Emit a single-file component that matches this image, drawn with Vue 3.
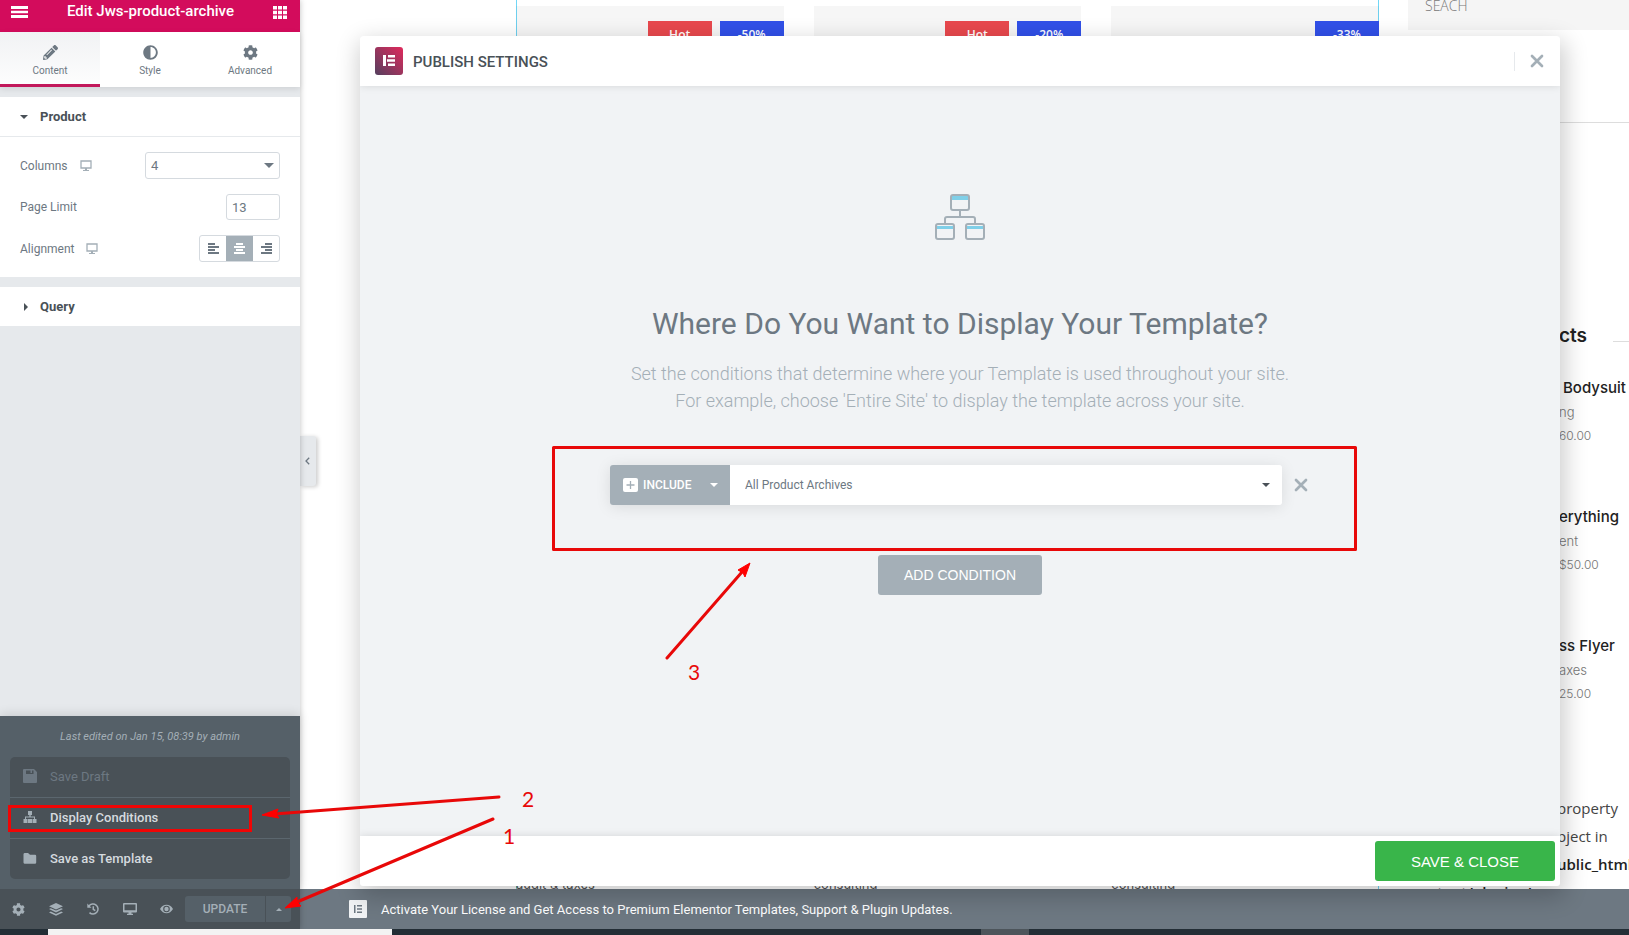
<script setup>
import { ref } from 'vue'

const cog = 'M487.4 315.7l-42.6-24.6c4.3-23.2 4.3-47 0-70.2l42.6-24.6c4.9-2.8 7.1-8.6 5.5-14-11.1-35.6-30-67.8-54.7-94.6-3.8-4.1-10-5.1-14.8-2.3L380.8 110c-17.9-15.4-38.5-27.3-60.8-35.1V25.8c0-5.6-3.9-10.5-9.4-11.7-36.7-8.2-74.3-7.8-109.2 0-5.5 1.2-9.4 6.1-9.4 11.7V75c-22.2 7.9-42.8 19.8-60.8 35.1L88.7 85.5c-4.9-2.8-11-1.9-14.8 2.3-24.7 26.7-43.6 58.9-54.7 94.6-1.7 5.4.6 11.2 5.5 14L67.3 221c-4.3 23.2-4.3 47 0 70.2l-42.6 24.6c-4.9 2.8-7.1 8.6-5.5 14 11.1 35.6 30 67.8 54.7 94.6 3.8 4.1 10 5.1 14.8 2.3l42.6-24.6c17.9 15.4 38.5 27.3 60.8 35.1v49.2c0 5.6 3.9 10.5 9.4 11.7 36.7 8.2 74.3 7.8 109.2 0 5.5-1.2 9.4-6.1 9.4-11.7v-49.2c22.2-7.9 42.8-19.8 60.8-35.1l42.6 24.6c4.9 2.8 11 1.9 14.8-2.3 24.7-26.7 43.6-58.9 54.7-94.6 1.5-5.5-.7-11.3-5.6-14.1zM256 336c-44.1 0-80-35.9-80-80s35.9-80 80-80 80 35.9 80 80-35.9 80-80 80z'
const pencil = 'M497.9 142.1l-46.1 46.1c-4.7 4.7-12.3 4.7-17 0l-111-111c-4.7-4.7-4.7-12.3 0-17l46.1-46.1c18.7-18.7 49.1-18.7 67.9 0l60.1 60.1c18.8 18.7 18.8 49.1 0 67.9zM284.2 99.8L21.6 362.4.4 483.9c-2.9 16.4 11.4 30.6 27.8 27.8l121.5-21.3 262.6-262.6c4.7-4.7 4.7-12.3 0-17l-111-111c-4.8-4.7-12.4-4.7-17.1 0zM124.1 339.9c-5.5-5.5-5.5-14.3 0-19.8l154-154c5.5-5.5 14.3-5.5 19.8 0s5.5 14.3 0 19.8l-154 154c-5.5 5.5-14.3 5.5-19.8 0zM88 424h48v36.3l-64.5 11.3-31.1-31.1L51.7 376H88v48z'
const half = 'M8 256c0 137 111 248 248 248s248-111 248-248S393 8 256 8 8 119 8 256zm248 184V72c101.700 0 184 82.300 184 184 0 101.700-82.300 184-184 184z'

const tabs = [
  { name: 'Content', path: pencil },
  { name: 'Style', path: half },
  { name: 'Advanced', path: cog },
]
const activeTab = ref('Content')
const columns = ref('4')
const pageLimit = ref('13')
const alignment = ref('center')
const alignments = [
  { id: 'left', path: 'M0 0h7v2H0zM0 3h11v2H0zM0 6h7v2H0zM0 9h11v2H0z' },
  { id: 'center', path: 'M2 0h7v2H2zM0 3h11v2H0zM2 6h7v2H2zM0 9h11v2H0z' },
  { id: 'right', path: 'M4 0h7v2H4zM0 3h11v2H0zM4 6h7v2H4zM0 9h11v2H0z' },
]

const products = [
  { badges: ['Hot', '-50%'], category: 'audit & taxes' },
  { badges: ['Hot', '-20%'], category: 'consulting' },
  { badges: ['-33%'], category: 'consulting' },
]
const sideProducts = [
  { name: ' Bodysuit', category: 'ng', price: '60.00' },
  { name: 'erything', category: 'ent', price: '$50.00' },
  { name: 'ss Flyer', category: 'axes', price: '25.00' },
]
</script>

<template>
  <div class="app">
    <div class="editor">
      <aside class="panel">
        <header class="panel-head">
          <button class="icon-btn" aria-label="Menu">
            <svg width="17" height="12" viewBox="0 0 17 12"><path d="M0 0h17v3H0zM0 4.700h17v2.600H0zM0 9h17v3H0z" fill="currentColor" /></svg>
          </button>
          <h1>Edit Jws-product-archive</h1>
          <button class="icon-btn" aria-label="Widgets">
            <svg width="14" height="13" viewBox="0 0 14 13"><path d="M0 0h4v3.600H0zM5 0h4v3.600H5zM10 0h4v3.600h-4zM0 4.700h4v3.600H0zM5 4.700h4v3.600H5zM10 4.700h4v3.600h-4zM0 9.400h4V13H0zM5 9.400h4V13H5zM10 9.400h4V13h-4z" fill="currentColor" /></svg>
          </button>
        </header>

        <nav class="tabs">
          <button v-for="t in tabs" :key="t.name" class="tab" :class="{ active: activeTab === t.name }" @click="activeTab = t.name">
            <svg width="15" height="15" viewBox="0 0 512 512"><path :d="t.path" fill="currentColor" /></svg>
            <span>{{ t.name }}</span>
          </button>
        </nav>

        <section class="section">
          <h2 class="section-head open">
            <svg width="8" height="8" viewBox="0 0 8 8"><path d="M0 2h8L4 6z" fill="currentColor" /></svg>Product
          </h2>
          <div class="controls">
            <div class="control">
              <label for="columns">Columns</label>
              <svg class="device" width="12" height="11" viewBox="0 0 12 11"><path d="M1 1h10v7H1z" fill="none" stroke="currentColor" stroke-width="1.300" /><path d="M5 8h2v2h2v1H3v-1h2z" fill="currentColor" /></svg>
              <div class="select-wrap columns-select">
                <select id="columns" v-model="columns"><option>4</option><option>3</option></select>
                <svg width="10" height="5" viewBox="0 0 8 4"><path d="M0 0h8L4 4z" fill="currentColor" /></svg>
              </div>
            </div>
            <div class="control short">
              <label for="limit">Page Limit</label>
              <input id="limit" v-model="pageLimit" class="limit" type="text">
            </div>
            <div class="control">
              <span>Alignment</span>
              <svg class="device" width="12" height="11" viewBox="0 0 12 11"><path d="M1 1h10v7H1z" fill="none" stroke="currentColor" stroke-width="1.300" /><path d="M5 8h2v2h2v1H3v-1h2z" fill="currentColor" /></svg>
              <div class="align-group">
                <button v-for="a in alignments" :key="a.id" :class="{ chosen: alignment === a.id }" :aria-label="'Align ' + a.id" @click="alignment = a.id">
                  <svg width="11" height="11" viewBox="0 0 11 11"><path :d="a.path" fill="currentColor" /></svg>
                </button>
              </div>
            </div>
          </div>
        </section>

        <section class="section">
          <h2 class="section-head">
            <svg width="8" height="8" viewBox="0 0 8 8"><path d="M4 0v8l4-4z" fill="currentColor" /></svg>Query
          </h2>
        </section>

        <div class="save-menu">
          <p>Last edited on Jan 15, 08:39 by admin</p>
          <ul>
            <li>
              <button disabled>
                <svg width="14" height="14" viewBox="0 0 14 14"><path fill-rule="evenodd" d="M1 0h10l3 3v10a1 1 0 0 1-1 1H1a1 1 0 0 1-1-1V1a1 1 0 0 1 1-1zM3 1.500v3.500h7.500V1.500H9V4H7.500V1.500z" fill="currentColor" /></svg>
                Save Draft
              </button>
            </li>
            <li>
              <button>
                <svg width="14" height="14" viewBox="0 0 14 14"><path d="M5 1h4v4H7.700v1.500H12V9h1.500v4h-4V9H11V7.600H3V9h1.500v4h-4V9H2V6.500h4.300V5H5zM5 9h4v4H5z" fill="currentColor" /></svg>
                Display Conditions
              </button>
            </li>
            <li>
              <button>
                <svg width="14" height="14" viewBox="0 0 14 14"><path d="M1.500 2H5l2 1.800h5A1.200 1.200 0 0 1 13.200 5v6.500a1.200 1.200 0 0 1-1.200 1.200H1.500A1.200 1.200 0 0 1 .5 11.500v-8.300A1.200 1.200 0 0 1 1.500 2z" fill="currentColor" /></svg>
                Save as Template
              </button>
            </li>
          </ul>
        </div>

        <footer class="toolbar">
          <button class="tool" aria-label="Settings"><svg width="13" height="13" viewBox="0 0 512 512"><path :d="cog" fill="currentColor" /></svg></button>
          <button class="tool" aria-label="Navigator"><svg width="14" height="13" viewBox="0 0 14 13"><path d="M7 0l7 3.200-7 3.200-7-3.200zM1.800 5.200L7 7.600l5.200-2.400L14 6.100 7 9.400 0 6.100zM1.800 8.500L7 10.900l5.200-2.400 1.800.9L7 12.800 0 9.400z" fill="currentColor" /></svg></button>
          <button class="tool" aria-label="History"><svg width="12" height="12" viewBox="0 0 12 12"><path d="M1.900 3.200A5 5 0 1 1 2.500 9.600M6.300 3.200v3.200l2 1.300" fill="none" stroke="currentColor" stroke-width="1.500" /><path d="M.3.600v4.200h4.200z" fill="currentColor" /></svg></button>
          <button class="tool" aria-label="Responsive mode"><svg width="14" height="12" viewBox="0 0 14 12"><path fill-rule="evenodd" d="M1 0h12a1 1 0 0 1 1 1v7.500a1 1 0 0 1-1 1H8.500v1.300H10V12H4v-1.200h1.500V9.500H1a1 1 0 0 1-1-1V1a1 1 0 0 1 1-1zM1.500 1.500v5.800h11V1.500z" fill="currentColor" /></svg></button>
          <button class="tool" aria-label="Preview"><svg width="13" height="10" viewBox="0 0 13 10"><path fill-rule="evenodd" d="M0 5Q2.500.8 6.500.8T13 5Q10.500 9.200 6.500 9.200T0 5zM6.500 1.700a3.300 3.300 0 1 0 0 6.600 3.300 3.300 0 0 0 0-6.600z" fill="currentColor" /><circle cx="6.500" cy="5" r="2.200" fill="currentColor" /></svg></button>
          <div class="update">
            <button class="update-main">UPDATE</button>
            <button class="update-more" aria-label="Save options"><svg width="6" height="3" viewBox="0 0 6 3"><path d="M0 3h6L3 0z" fill="currentColor" /></svg></button>
          </div>
        </footer>
      </aside>

      <main class="stage">
        <div class="preview">
          <div class="products">
            <article v-for="(p, i) in products" :key="i">
              <div class="photo">
                <span v-for="b in p.badges" :key="b" class="badge" :class="{ hot: b === 'Hot' }">{{ b }}</span>
              </div>
              <p>{{ p.category }}</p>
            </article>
          </div>
          <div class="side">
            <div class="search">SEACH</div>
            <div class="rule"></div>
            <div class="side-title"><h3>cts</h3><i></i></div>
            <div v-for="s in sideProducts" :key="s.name" class="side-item">
              <h4>{{ s.name }}</h4>
              <p>{{ s.category }}</p>
              <p class="price">{{ s.price }}</p>
            </div>
            <div class="note">
              <p>property</p>
              <p>bject in</p>
              <p><b>ublic_html</b></p>
              <p class="path"><b>tent/plugins/</b></p>
            </div>
          </div>
        </div>

        <div class="notice">
          <svg width="18" height="18" viewBox="0 0 18 18"><rect width="18" height="18" rx="1" fill="#f1f3f5" /><path d="M5 5h1.500v8H5zM8 5h5v1.500H8zM8 8.200h5v1.500H8zM8 11.500h5V13H8z" fill="#6d7882" /></svg>
          <span>Activate Your License and Get Access to Premium Elementor Templates, Support &amp; Plugin Updates.</span>
        </div>

        <button class="collapse" aria-label="Hide panel"><svg width="5" height="8" viewBox="0 0 5 8"><path d="M4.200.700L1 4l3.200 3.300" fill="none" stroke="#6d7882" stroke-width="1.300" /></svg></button>

        <section class="modal" role="dialog" aria-labelledby="modal-title">
          <header class="modal-head">
            <svg width="28" height="28" viewBox="0 0 28 28">
              <defs><linearGradient id="brand" x1="0" y1="1" x2="1" y2="0"><stop offset="0" stop-color="#54405f" /><stop offset=".5" stop-color="#9a355d" /><stop offset="1" stop-color="#e0295c" /></linearGradient></defs>
              <rect width="28" height="28" rx="3" fill="url(#brand)" /><path d="M8 8h3v11H8zM13 8h7v2.400h-7zM12 12.300h8v2.400h-8zM13 16.600h7V19h-7z" fill="#fff" />
            </svg>
            <h2 id="modal-title">PUBLISH SETTINGS</h2>
            <button class="close" aria-label="Close"><svg width="14" height="14" viewBox="0 0 14 14"><path d="M2 2l10 10M12 2L2 12" stroke="currentColor" stroke-width="2.700" stroke-linecap="round" /></svg></button>
          </header>

          <div class="modal-body">
            <svg width="50" height="46" viewBox="0 0 50 46" fill="none">
              <path d="M17 2h16v4H17zM2 32h16v3H2zM32 32h16v3H32z" fill="#7fcfe8" />
              <g stroke="#a4afb7" stroke-width="2"><rect x="16" y="1" width="18" height="15" rx="2" /><rect x="1" y="30" width="18" height="15" rx="2" /><rect x="31" y="30" width="18" height="15" rx="2" /><path d="M25 16v7M10 30v-5q0-2 2-2h26q2 0 2 2v5" /></g>
            </svg>
            <h3>Where Do You Want to Display Your Template?</h3>
            <p>Set the conditions that determine where your Template is used throughout your site.<br>For example, choose 'Entire Site' to display the template across your site.</p>
            <div class="condition">
              <div class="condition-box">
                <div class="select-wrap include">
                  <svg class="plus" width="15" height="14" viewBox="0 0 15 14"><rect width="15" height="14" rx="2" fill="#fff" /><path d="M7.500 3v8M3.500 7h8" stroke="#a4afb7" stroke-width="1.300" /></svg>
                  <select aria-label="Condition type"><option>INCLUDE</option><option>EXCLUDE</option></select>
                  <svg width="8" height="4" viewBox="0 0 8 4"><path d="M0 0h8L4 4z" fill="currentColor" /></svg>
                </div>
                <div class="select-wrap archive">
                  <select aria-label="Condition"><option>All Product Archives</option></select>
                  <svg width="8" height="4" viewBox="0 0 8 4"><path d="M0 0h8L4 4z" fill="currentColor" /></svg>
                </div>
              </div>
              <button class="remove" aria-label="Remove condition"><svg width="14" height="14" viewBox="0 0 14 14"><path d="M2 2l10 10M12 2L2 12" stroke="currentColor" stroke-width="2.700" stroke-linecap="round" /></svg></button>
            </div>
            <button class="add">ADD CONDITION</button>
          </div>

          <footer class="modal-foot"><button class="save">SAVE &amp; CLOSE</button></footer>
        </section>
      </main>
    </div>

    <div class="taskbar"><span class="task-light"></span><span class="task-mid"></span></div>

    <svg class="marks" width="100%" height="100%">
      <g fill="none" stroke="#e80808" stroke-width="3" stroke-linecap="round" stroke-linejoin="round">
        <rect x="553.500" y="447.500" width="802" height="102" />
        <path d="M667 658L742 572M499 797L274 814M493 819L297 902" />
      </g>
      <rect x="9.500" y="806.500" width="241" height="24" fill="none" stroke="#f00505" stroke-width="3" />
      <path d="M750 563L738 570L743 573L745 577ZM262 815L278 809L276 814L279 818ZM285 908L297 897L297 902L301 906Z" fill="#f00" stroke="#f00" />
      <g fill="#e80808" class="digits"><text x="503" y="844">1</text><text x="522" y="807">2</text><text x="688" y="680">3</text></g>
    </svg>
  </div>
</template>

<style>
body { margin: 0; }
</style>

<style scoped>
* { box-sizing: border-box; }
h1, h2, h3, h4, p, ul { margin: 0; padding: 0; }
button, select, input { font: inherit; color: inherit; border: 0; background: none; padding: 0; margin: 0; border-radius: 0; }
svg { display: block; flex: none; }
.app { position: relative; height: 100vh; display: flex; flex-direction: column; overflow: hidden; font-family: Roboto, "Liberation Sans", sans-serif; font-size: 12px; color: #6d7882; }
.editor { flex: 1; min-height: 0; display: grid; grid-template-columns: 300px minmax(0, 1fr); }

.panel { position: relative; z-index: 1; display: flex; flex-direction: column; background: #e6e9ec; box-shadow: 0 0 6px rgba(0, 0, 0, .25); }
.panel-head { height: 32px; padding: 0 13px 10px 11px; display: flex; align-items: center; justify-content: space-between; background: #d30c5c; color: #fff; }
.panel-head h1 { font-size: 15px; line-height: 22px; font-weight: 500; }
.icon-btn { display: block; padding-top: 2px; }
.tabs { display: grid; grid-template-columns: repeat(3, 1fr); height: 55px; background: #fff; box-shadow: 0 2px 6px rgba(0, 0, 0, .1); }
.tab { display: flex; flex-direction: column; align-items: center; gap: 5px; padding-top: 13px; border-bottom: 3px solid transparent; font-size: 10px; line-height: 12px; }
.tab.active { border-color: #c2185b; background: linear-gradient(#f1f2f4, #fdfdfd); }
.section { margin-top: 10px; background: #fff; }
.section-head { height: 39px; display: flex; align-items: center; gap: 12px; padding-left: 20px; font-size: 13px; font-weight: 700; color: #495157; }
.section-head.open { height: 40px; border-bottom: 1px solid #e6e9ec; }
.controls { display: grid; gap: 15px; padding: 15px 20px; }
.control { display: flex; align-items: center; height: 27px; }
.control.short { height: 26px; }
.device { margin-left: 12px; color: #a4afb7; }
.select-wrap { position: relative; display: flex; align-items: center; }
.select-wrap select { width: 100%; height: 100%; appearance: none; }
.select-wrap > svg:last-child { position: absolute; right: 12px; pointer-events: none; }
.columns-select { width: 135px; height: 27px; margin-left: auto; }
.columns-select select { border: 1px solid #d5dadf; border-radius: 3px; padding-left: 5px; font-size: 13px; }
.columns-select > svg:last-child { right: 6px; }
.limit { width: 54px; height: 26px; margin-left: auto; padding-left: 5px; border: 1px solid #d5dadf; border-radius: 3px; font-size: 13px; }
.align-group { margin-left: auto; display: grid; grid-template-columns: 1fr 27px 1fr; height: 27px; border: 1px solid #d5dadf; border-radius: 3px; width: 81px; overflow: hidden; }
.align-group button { display: grid; place-items: center; }
.align-group .chosen { background: #a4afb7; color: #fff; }

.save-menu { margin-top: auto; padding: 12px 10px 10px; background: #556068; box-shadow: 0 -2px 10px rgba(0, 0, 0, .12); }
.save-menu p { text-align: center; font-style: italic; font-size: 11px; line-height: 18px; color: #a4afb7; margin-bottom: 11px; }
.save-menu ul { list-style: none; background: #495157; border-radius: 5px; }
.save-menu li + li { border-top: 1px solid #5b666e; }
.save-menu li button { display: flex; align-items: center; gap: 13px; width: 100%; height: 40px; padding: 0 0 2px 13px; font-size: 13px; font-weight: 500; color: #d5dadf; }
.save-menu li svg { color: #a4afb7; }
.save-menu li button:disabled { color: #6d7882; font-weight: 400; }
.save-menu li button:disabled svg { color: #6d7882; }
.toolbar { height: 40px; display: flex; align-items: center; padding-right: 9px; background: #495157; color: #a4afb7; }
.tool { width: 37px; display: grid; place-items: center; }
.update { margin-left: auto; display: flex; height: 26px; gap: 1px; border-radius: 3px; overflow: hidden; }
.update-main { width: 80px; background: #556068; font-size: 12px; font-weight: 500; }
.update-more { width: 25px; background: #556068; display: grid; place-items: center; }

.stage { position: relative; display: flex; flex-direction: column; min-height: 0; }
.preview { flex: 1; min-height: 0; overflow: hidden; display: flex; gap: 29px; padding-left: 216px; background: #fff; }
.products { flex: 1; display: grid; grid-template-columns: repeat(3, 1fr); gap: 30px; padding-top: 6px; box-shadow: inset 1px 0 #71d7f7, inset -1px 0 #71d7f7; }
.products article { display: flex; flex-direction: column; justify-content: space-between; min-height: 0; }
.photo { height: 340px; display: flex; justify-content: flex-end; align-items: flex-start; gap: 8px; padding-top: 15px; background: rgba(0, 0, 0, .035); }
.badge { width: 64px; height: 25px; line-height: 27px; text-align: center; font-family: "Open Sans", sans-serif; font-weight: 600; font-size: 12px; color: #fff; background: #3150e8; }
.badge.hot { background: #e8484d; }
.products p { margin-bottom: -3px; font-family: Inter, sans-serif; font-size: 13px; line-height: 16px; color: #555; }
.side { width: 221px; font-family: Inter, sans-serif; }
.search { height: 30px; padding-left: 17px; line-height: 12px; font-family: "Open Sans", sans-serif; font-size: 14px; font-weight: 300; color: #777; background: #f5f5f5; }
.rule { height: 1px; background: #ddd; margin-top: 92px; }
.side-title { display: flex; align-items: center; justify-content: space-between; height: 24px; margin-top: 201px; margin-bottom: 27px; padding-left: 151px; }
.side-title h3 { font-size: 19px; font-weight: 600; line-height: 24px; color: #222; }
.side-title i { width: 16px; height: 1px; margin-top: 10px; background: #ddd; }
.side-item { height: 129px; padding-left: 151px; }
.side-item h4 { font-size: 15px; font-weight: 500; line-height: 26px; color: #222; white-space: pre; }
.side-item p { font-size: 13px; line-height: 23px; color: #777; font-weight: 300; }
.side-item .price { font-size: 12px; }
.note { margin-top: 32px; padding-left: 149px; font-family: "Open Sans", sans-serif; font-size: 15px; line-height: 28px; color: #444; white-space: nowrap; }
.note b { color: #222; font-weight: 600; }
.note .path { margin-left: -120px; }
.notice { height: 40px; display: flex; align-items: center; gap: 14px; padding-left: 49px; background: #6d7882; color: #fff; font-size: 13px; }
.collapse { position: absolute; left: 0; top: 436px; width: 16px; height: 50px; display: grid; place-items: center; padding-right: 2px; background: #e6e9ec; border-radius: 0 3px 3px 0; box-shadow: 2px 1px 4px rgba(0, 0, 0, .2); }

.modal { position: absolute; inset: 36px 69px 43px 60px; display: flex; flex-direction: column; border-radius: 3px; background: #f1f3f5; box-shadow: 2px 8px 23px 3px rgba(0, 0, 0, .2); overflow: hidden; }
.modal-head { height: 50px; display: flex; align-items: center; gap: 10px; padding: 0 16px 0 15px; background: #fff; box-shadow: 0 0 8px rgba(0, 0, 0, .12); }
.modal-head h2 { padding-top: 2px; font-size: 15px; font-weight: 500; color: #495157; }
.close { margin-left: auto; height: 19px; padding-left: 15px; border-left: 1px solid #e6e9ec; color: #a4afb7; }
.modal-body { flex: 1; min-height: 0; display: flex; flex-direction: column; align-items: center; padding-top: 108px; text-align: center; }
.modal-body h3 { margin-top: 66px; font-size: 30px; line-height: 36px; font-weight: 400; }
.modal-body p { margin-top: 18px; font-size: 18px; line-height: 27px; font-weight: 300; color: #a4afb7; }
.condition { display: flex; width: 700px; max-width: 100%; height: 40px; margin-top: 51px; }
.condition-box { flex: 1; display: flex; border-radius: 3px; overflow: hidden; box-shadow: 0 2px 15px rgba(0, 0, 0, .1); }
.include { width: 120px; background: #a4afb7; color: #fff; font-weight: 500; }
.include .plus { position: absolute; left: 13px; pointer-events: none; }
.include select { padding-left: 33px; }
.archive { flex: 1; background: #fff; }
.archive select { padding-left: 15px; }
.archive > svg:last-child { color: #495157; }
.remove { width: 28px; padding-left: 12px; color: #a4afb7; }
.add, .save { height: 40px; border-radius: 3px; color: #fff; font-family: "Liberation Sans", Arial, sans-serif; }
.add { width: 164px; margin-top: 50px; background: #a4afb7; font-size: 14px; }
.modal-foot { height: 50px; display: flex; align-items: center; justify-content: flex-end; padding-right: 5px; background: #fff; box-shadow: 0 0 8px rgba(0, 0, 0, .12); }
.save { width: 180px; background: #39b54a; font-size: 15px; }

.taskbar { position: relative; z-index: 2; height: 6px; display: flex; background: #232e36; }
.task-light { width: 344px; margin-left: 48px; background: #f3f3f3; }
.task-mid { width: 48px; margin-left: 589px; background: #4d555b; }
.marks { position: absolute; inset: 0; z-index: 3; pointer-events: none; }
.digits { font-family: Lato, sans-serif; font-size: 21px; }
</style>
